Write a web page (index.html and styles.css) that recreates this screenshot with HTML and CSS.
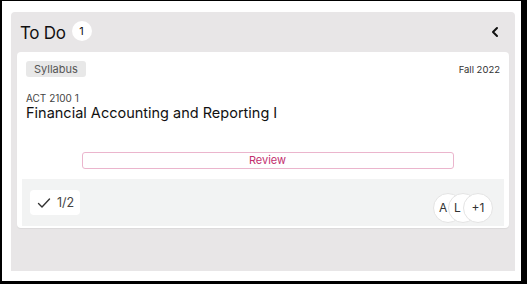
FILE: index.html
```html
<!DOCTYPE html>
<html>
<head>
<meta charset="utf-8">
<link rel="stylesheet" href="styles.css">
</head>
<body>
<div class="frame">
  <section class="panel">
    <header class="panel-head">
      <div class="title-wrap">
        <h1 class="title">To Do</h1>
        <span class="count">1</span>
      </div>
      <svg class="chev" width="10" height="12" viewBox="0 0 10 12"><path d="M7 2 L3 6 L7 10" fill="none" stroke="#111" stroke-width="2" stroke-linecap="round" stroke-linejoin="round"/></svg>
    </header>
    <article class="card">
      <div class="card-top">
        <span class="tag">Syllabus</span>
        <span class="term">Fall 2022</span>
      </div>
      <div class="course">ACT 2100 1</div>
      <div class="course-name">Financial Accounting and Reporting I</div>
      <div class="review-row">
        <button class="review">Review</button>
      </div>
      <div class="card-foot">
        <div class="progress">
          <svg width="14" height="12" viewBox="0 0 14 12"><path d="M1.5 6.5 L5 10 L12.5 2" fill="none" stroke="#333" stroke-width="1.4" stroke-linecap="round" stroke-linejoin="round"/></svg>
          <span>1/2</span>
        </div>
        <div class="avatars">
          <span class="av av-cut">A</span>
          <span class="av av-cut">L</span>
          <span class="av">+1</span>
        </div>
      </div>
    </article>
  </section>
</div>
</body>
</html>
```
FILE: styles.css
```css
html, body {
  margin: 0;
  padding: 0;
  background: #fff;
}
body {
  font-family: Inter, "Noto Sans", sans-serif;
}
.frame {
  box-sizing: border-box;
  width: 527px;
  height: 284px;
  border-style: solid;
  border-color: #000;
  border-width: 1px 6px 3px 2px;
  padding: 11px 0 0 9px;
  background: #fff;
}
.panel {
  width: 504px;
  height: 259px;
  background: #e8e6e7;
  border-radius: 4px 4px 0 0;
  display: flex;
  flex-direction: column;
}
.panel-head {
  height: 40px;
  display: flex;
  align-items: center;
  justify-content: space-between;
  padding: 0 15px 0 9px;
}
.title-wrap {
  display: flex;
  align-items: center;
  gap: 6px;
}
.title {
  margin: 0;
  font-size: 17px;
  font-weight: 400;
  color: #111;
  letter-spacing: -0.3px;
  margin-top: 2px;
}
.count {
  width: 20px;
  height: 20px;
  border-radius: 50%;
  background: #fff;
  font-size: 11px;
  display: flex;
  align-items: center;
  justify-content: center;
  color: #111;
  margin-top: -3px;
}
.chev {
  display: block;
}
.card {
  margin: 0 6px;
  height: 176px;
  background: #fff;
  border-radius: 4px;
  box-shadow: 0 1px 1px rgba(0,0,0,0.06);
  display: flex;
  flex-direction: column;
}
.card-top {
  display: flex;
  justify-content: space-between;
  align-items: center;
  padding: 9px 9px 0 9px;
}
.tag {
  background: #e8e8e8;
  border-radius: 3px;
  font-size: 11px;
  color: #555;
  padding: 1px 8px;
  line-height: 14px;
}
.term {
  font-size: 9.5px;
  color: #333;
}
.course {
  margin: 15px 9px 0 9px;
  font-size: 10px;
  color: #444;
  line-height: 12px;
}
.course-name {
  margin: 0 9px;
  font-size: 14.5px;
  color: #111;
  line-height: 18px;
}
.review-row {
  display: flex;
  justify-content: center;
  margin-top: 30px;
  padding-left: 9px;
}
.review {
  width: 372px;
  height: 17px;
  border: 1px solid #ebb5cd;
  border-radius: 3px;
  background: #fff;
  color: #c2306f;
  font-family: inherit;
  font-size: 11px;
  padding: 0;
  line-height: 15px;
}
.card-foot {
  margin: 10px 5px 2px 5px;
  flex: 1;
  background: #f2f3f3;
  display: flex;
  align-items: center;
  justify-content: space-between;
  padding: 0 8px;
}
.progress {
  display: flex;
  align-items: center;
  gap: 6px;
  background: #fff;
  border-radius: 4px;
  height: 25px;
  padding: 0 6px 0 7px;
  font-size: 12.5px;
  color: #444;
}
.avatars {
  display: flex;
  margin-right: 3px;
  margin-top: 10px;
}
.av {
  box-sizing: border-box;
  width: 30px;
  height: 30px;
  border-radius: 50%;
  background: #fff;
  border: 1px solid #e4e4e4;
  display: flex;
  align-items: center;
  justify-content: center;
  font-size: 12px;
  color: #333;
  margin-left: -15px;
  overflow: hidden;
}
.av:first-child {
  margin-left: 0;
}
.av-cut {
  justify-content: flex-start;
  padding-left: 5px;
}
```
